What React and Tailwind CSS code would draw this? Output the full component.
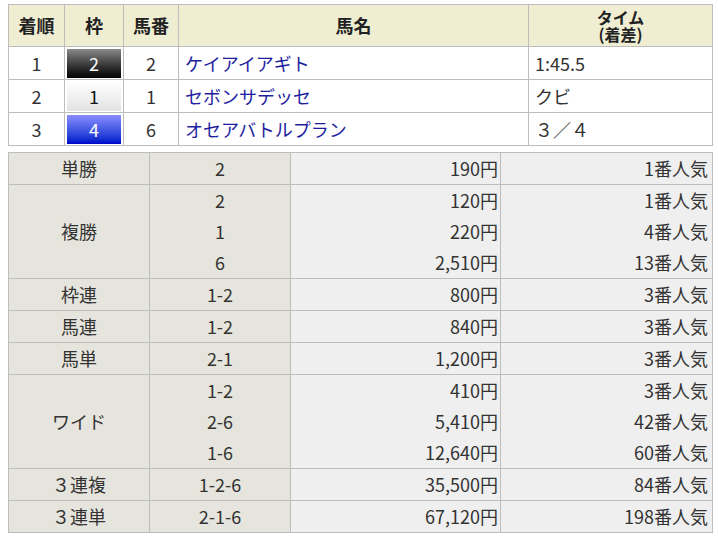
import React from "react";

const results = [
  { rank: 1, waku: 2, num: 2, name: "ケイアイアギト", time: "1:45.5" },
  { rank: 2, waku: 1, num: 1, name: "セボンサデッセ", time: "クビ" },
  { rank: 3, waku: 4, num: 6, name: "オセアバトルプラン", time: "３／４" },
];

const wakuStyle = {
  1: "bg-gradient-to-b from-white to-[#e2e2e2] text-[#111]",
  2: "bg-gradient-to-b from-[#8a8a8a] to-[#050505] text-white",
  4: "bg-gradient-to-b from-[#8c8cff] to-[#0000c8] text-white",
};

const payouts = [
  { type: "単勝", rows: [["2", "190円", "1番人気"]] },
  {
    type: "複勝",
    rows: [
      ["2", "120円", "1番人気"],
      ["1", "220円", "4番人気"],
      ["6", "2,510円", "13番人気"],
    ],
  },
  { type: "枠連", rows: [["1-2", "800円", "3番人気"]] },
  { type: "馬連", rows: [["1-2", "840円", "3番人気"]] },
  { type: "馬単", rows: [["2-1", "1,200円", "3番人気"]] },
  {
    type: "ワイド",
    rows: [
      ["1-2", "410円", "3番人気"],
      ["2-6", "5,410円", "42番人気"],
      ["1-6", "12,640円", "60番人気"],
    ],
  },
  { type: "３連複", rows: [["1-2-6", "35,500円", "84番人気"]] },
  { type: "３連単", rows: [["2-1-6", "67,120円", "198番人気"]] },
];

const lines = (items) =>
  items.map((t, i) => (
    <React.Fragment key={i}>
      {i > 0 && <br />}
      {t}
    </React.Fragment>
  ));

export default function App() {
  return (
    <div className="w-[718px] h-[539px] bg-white pt-1 px-2 text-[18px] text-[#333] font-['Noto_Sans_CJK_JP','Noto_Sans',sans-serif]">
      <table className="w-[704px] border-collapse table-fixed">
        <colgroup>
          <col className="w-[56px]" />
          <col className="w-[59px]" />
          <col className="w-[55px]" />
          <col className="w-[350px]" />
          <col className="w-[184px]" />
        </colgroup>
        <thead>
          <tr className="h-[42px] bg-[#efedd2] text-[#222] font-bold">
            <th className="border border-[#bdbdbd] p-0">着順</th>
            <th className="border border-[#bdbdbd] p-0">枠</th>
            <th className="border border-[#bdbdbd] p-0">馬番</th>
            <th className="border border-[#bdbdbd] p-0">馬名</th>
            <th className="border border-[#bdbdbd] p-0 text-[16px] leading-[17px]">
              タイム
              <br />
              (着差)
            </th>
          </tr>
        </thead>
        <tbody>
          {results.map((r) => (
            <tr key={r.rank} className="h-[33px]">
              <td className="border border-[#bdbdbd] text-center p-0">{r.rank}</td>
              <td className="border border-[#bdbdbd] p-0 px-[2px]">
                <div className={`h-[29px] flex items-center justify-center ${wakuStyle[r.waku]}`}>
                  {r.waku}
                </div>
              </td>
              <td className="border border-[#bdbdbd] text-center p-0">{r.num}</td>
              <td className="border border-[#bdbdbd] p-0 pl-[6px] text-[#1e1ea0]">{r.name}</td>
              <td className="border border-[#bdbdbd] p-0 pl-[6px]">{r.time}</td>
            </tr>
          ))}
        </tbody>
      </table>

      <table className="mt-[6px] w-[704px] border-collapse table-fixed">
        <colgroup>
          <col className="w-[141px]" />
          <col className="w-[141px]" />
          <col className="w-[210px]" />
          <col className="w-[212px]" />
        </colgroup>
        <tbody>
          {payouts.map((p) => (
            <tr key={p.type} className={p.rows.length > 1 ? "h-[93px]" : "h-[32px]"}>
              <td className="border border-[#bdbdbd] bg-[#e6e5dd] text-center p-0">{p.type}</td>
              <td className="border border-[#bdbdbd] bg-[#e6e5dd] text-center p-0 leading-[31px]">
                {lines(p.rows.map((x) => x[0]))}
              </td>
              <td className="border border-[#bdbdbd] bg-[#efefef] text-right p-0 pr-[2px] leading-[31px]">
                {lines(p.rows.map((x) => x[1]))}
              </td>
              <td className="border border-[#bdbdbd] bg-[#efefef] text-right p-0 pr-[4px] leading-[31px]">
                {lines(p.rows.map((x) => x[2]))}
              </td>
            </tr>
          ))}
        </tbody>
      </table>
    </div>
  );
}
